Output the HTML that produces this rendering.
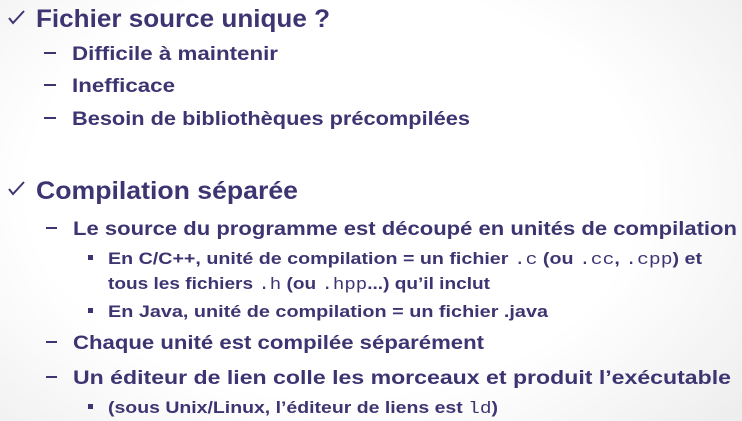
<!DOCTYPE html>
<html><head><meta charset="utf-8"><style>
html,body{margin:0;padding:0}
body{width:742px;height:421px;overflow:hidden;background:radial-gradient(ellipse 75% 90% at 45% 45%,#ffffff 55%,#ebebeb 100%)}
svg{display:block}
text{font-family:"Liberation Sans",sans-serif;font-weight:bold;fill:#3d3572}
.m{font-family:"Liberation Mono",monospace;font-weight:normal}
</style></head><body>
<svg width="742" height="421" viewBox="0 0 742 421">
<path d="M9 18 L13 23 L24 11" stroke="#3d3572" stroke-width="2" fill="none"/>
<text x="36" y="27" font-size="25" textLength="294" lengthAdjust="spacingAndGlyphs">Fichier source unique ?</text>
<rect x="44" y="52" width="12" height="2" fill="#3d3572"/>
<text x="72" y="60" font-size="19" textLength="206" lengthAdjust="spacingAndGlyphs">Difficile à maintenir</text>
<rect x="44" y="84" width="12" height="2" fill="#3d3572"/>
<text x="72" y="92" font-size="19" textLength="103" lengthAdjust="spacingAndGlyphs">Inefficace</text>
<rect x="44" y="117" width="12" height="2" fill="#3d3572"/>
<text x="72" y="125" font-size="19" textLength="398" lengthAdjust="spacingAndGlyphs">Besoin de bibliothèques précompilées</text>

<path d="M9 189 L13 194 L24 182" stroke="#3d3572" stroke-width="2" fill="none"/>
<text x="36" y="199" font-size="25" textLength="262" lengthAdjust="spacingAndGlyphs">Compilation séparée</text>
<rect x="46" y="227" width="11" height="2" fill="#3d3572"/>
<text x="73" y="235" font-size="19" textLength="664" lengthAdjust="spacingAndGlyphs">Le source du programme est découpé en unités de compilation</text>
<rect x="88" y="255" width="5" height="5" fill="#3d3572"/>
<text x="108" y="264" font-size="16.5" textLength="594" lengthAdjust="spacingAndGlyphs">En C/C++, unité de compilation = un fichier <tspan class="m">.c</tspan> (ou <tspan class="m">.cc</tspan>, <tspan class="m">.cpp</tspan>) et</text>
<text x="108" y="289" font-size="16.5" textLength="382" lengthAdjust="spacingAndGlyphs">tous les fichiers <tspan class="m">.h</tspan> (ou <tspan class="m">.hpp</tspan>...) qu’il inclut</text>
<rect x="88" y="308" width="5" height="5" fill="#3d3572"/>
<text x="108" y="317" font-size="16.5" textLength="440" lengthAdjust="spacingAndGlyphs">En Java, unité de compilation = un fichier .java</text>
<rect x="46" y="341" width="11" height="2" fill="#3d3572"/>
<text x="73" y="349" font-size="19" textLength="411" lengthAdjust="spacingAndGlyphs">Chaque unité est compilée séparément</text>
<rect x="46" y="376" width="11" height="2" fill="#3d3572"/>
<text x="73" y="384" font-size="19" textLength="658" lengthAdjust="spacingAndGlyphs">Un éditeur de lien colle les morceaux et produit l’exécutable</text>
<rect x="88" y="404" width="5" height="5" fill="#3d3572"/>
<text x="108" y="413" font-size="16.5" textLength="390" lengthAdjust="spacingAndGlyphs">(sous Unix/Linux, l’éditeur de liens est <tspan class="m">ld</tspan>)</text>
</svg>
</body></html>
